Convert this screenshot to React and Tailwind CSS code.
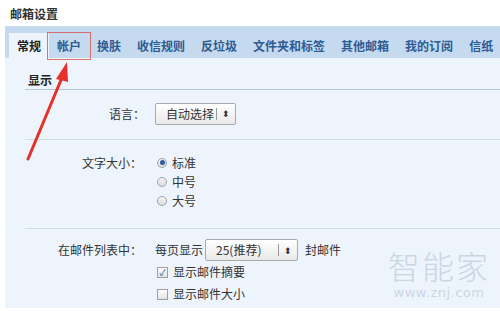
import { useState } from "react";

const tabs = ["常规", "帐户", "换肤", "收信规则", "反垃圾", "文件夹和标签", "其他邮箱", "我的订阅", "信纸"];

function Select({ label, width }) {
    return (
        <div className={`flex items-center h-[22px] ${width} border border-[#a9a9a9] rounded-[2px] bg-gradient-to-b from-white to-[#e9e9e9] text-[12px] text-[#333]`}>
            <span className="flex-1 pl-[10px] whitespace-nowrap">{label}</span>
            <span className="w-px h-[12px] bg-[#9a9a9a]"></span>
            <span className="w-[18px] text-center text-[9px] leading-none">⬍</span>
        </div>
    );
}

function Radio({ checked, text }) {
    return (
        <div className="flex items-center gap-[5px] h-[19px]">
            <span className="w-[10px] h-[10px] rounded-full border border-[#9aa4ae] bg-gradient-to-b from-[#f4f4f4] to-[#dcdcdc] flex items-center justify-center">
                {checked && <span className="w-[5px] h-[5px] rounded-full bg-[#2e5d97]"></span>}
            </span>
            <span>{text}</span>
        </div>
    );
}

function Checkbox({ checked, text }) {
    return (
        <div className="flex items-center gap-[5px] h-[22px]">
            <span className="w-[11px] h-[11px] border border-[#a0a0a0] bg-gradient-to-b from-white to-[#e2e2e2] flex items-center justify-center text-[9px] leading-none text-[#2e5d97]">
                {checked && "✓"}
            </span>
            <span>{text}</span>
        </div>
    );
}

export default function App() {
    const [active] = useState(0);

    return (
        <div className="relative w-[500px] h-[311px] overflow-hidden bg-white font-['Noto_Sans_CJK_SC',sans-serif] text-[12px] text-[#333]">
            <div className="h-[26px] pl-[10px] pt-[6px] font-bold text-[12px] leading-[16px] text-[#333]">邮箱设置</div>

            <div className="ml-[5px] h-[282px] bg-[#eef4fb]">
                {/* tabs */}
                <div className="flex h-[32px] bg-[#c6daef] pl-[4px] items-end overflow-hidden">
                    {tabs.map((t, i) => (
                        <div
                            key={t}
                            className={`h-[25px] shrink-0 whitespace-nowrap flex items-center px-[8px] font-bold text-[12px] ${i === active ? "bg-[#eef4fb] text-[#222]" : "text-[#2d5b93]"}`}
                        >
                            {t}
                        </div>
                    ))}
                </div>

                <div className="pl-[20px]">
                    <div className="pt-[13px] pl-[3px] pb-[1px] font-bold text-[12px] leading-[17px] text-[#222] border-b border-[#b3c7dc]">显示</div>

                    {/* language */}
                    <div className="flex items-center h-[50px] pb-[2px] border-b border-[#d3dde8]">
                        <div className="w-[130px] text-right pr-[10px]">语言：</div>
                        <Select label="自动选择" width="w-[81px]" />
                    </div>

                    {/* font size */}
                    <div className="flex h-[89px] pt-[13px] border-b border-[#d3dde8]">
                        <div className="w-[130px] text-right pr-[13px] leading-[19px]">文字大小：</div>
                        <div className="flex flex-col pl-[2px]">
                            <Radio checked text="标准" />
                            <Radio text="中号" />
                            <Radio text="大号" />
                        </div>
                    </div>

                    {/* list */}
                    <div className="flex pt-[10px]">
                        <div className="w-[130px] text-right pr-[13px] leading-[22px]">在邮件列表中：</div>
                        <div className="flex flex-col">
                            <div className="flex items-center">
                                <span className="mr-[2px]">每页显示</span>
                                <Select label="25(推荐)" width="w-[93px]" />
                                <span className="ml-[7px]">封邮件</span>
                            </div>
                            <div className="pl-[2px]">
                                <Checkbox checked text="显示邮件摘要" />
                                <Checkbox text="显示邮件大小" />
                            </div>
                        </div>
                    </div>
                </div>
            </div>

            {/* highlight box around tab */}
            <div className="absolute left-[47px] top-[32px] w-[44px] h-[28px] border-[1.5px] border-[#d9534f]/80"></div>

            {/* arrow */}
            <svg className="absolute left-0 top-0" width="500" height="311">
                <path d="M28 159 L61 80" stroke="#e8302a" strokeWidth="3" strokeLinecap="round" />
                <path d="M67 62 L56 79 L68 82 Z" fill="#e8302a" />
            </svg>

            {/* watermark */}
            <div className="absolute left-[388px] top-[247px] flex flex-col items-center text-[#c9d7e2] whitespace-nowrap">
                <span className="text-[32px] leading-[36px] font-light tracking-[2px]">智能家</span>
                <span className="mt-[2px] text-[13px] leading-[15px] font-['DejaVu_Sans',sans-serif] tracking-[0.5px]">www.znj.com</span>
            </div>
        </div>
    );
}
